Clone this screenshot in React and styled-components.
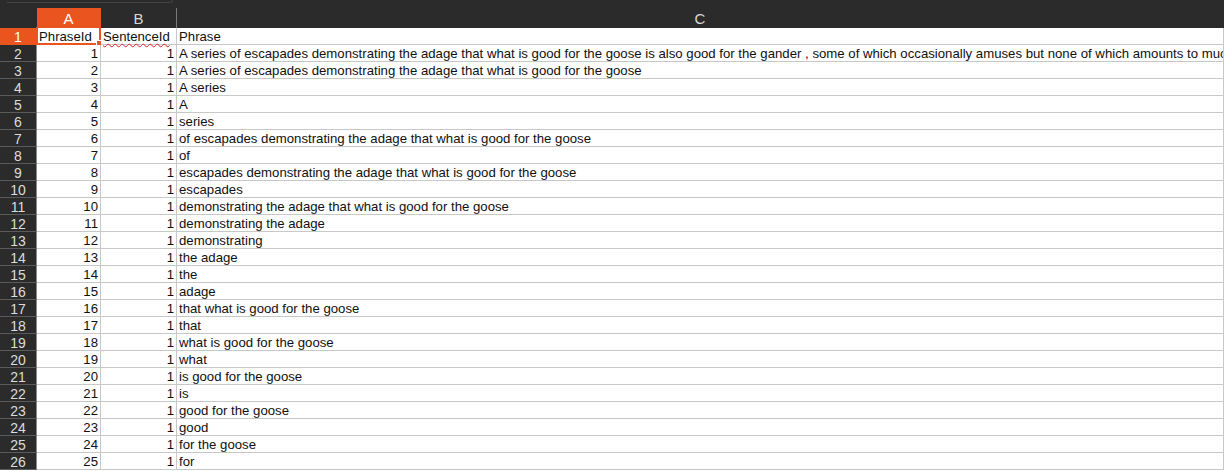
import styled, { createGlobalStyle } from "styled-components";

const GlobalStyle = createGlobalStyle`
  html, body {
    margin: 0;
    padding: 0;
    background: #ffffff;
    overflow: hidden;
  }
  body {
    font-family: "Liberation Sans", Arial, sans-serif;
  }
`;

const ORANGE = "#e9541f";

const Window = styled.div`
  width: 1224px;
  height: 471px;
  display: flex;
  flex-direction: column;
  overflow: hidden;
  background: #ffffff;
`;

const TopStrip = styled.div`
  height: 8px;
  background: #2b2b2b;
  display: flex;
  padding-left: 7px;
`;

const NameBoxEdge = styled.div`
  width: 165px;
  height: 2px;
  border-bottom: 1px solid #444;
  border-right: 1px solid #444;
  border-bottom-right-radius: 3px;
`;

const Sheet = styled.div`
  display: grid;
  grid-template-columns: 37px 64px 76px 1fr;
  grid-auto-rows: 17px;
  grid-template-rows: 20px;
`;

const ColHead = styled.div`
  background: ${(p) => (p.$active ? ORANGE : "#2b2b2b")};
  color: ${(p) => (p.$active ? "#ffffff" : "#d8d8d8")};
  font-size: 15px;
  display: flex;
  align-items: center;
  justify-content: center;
  border-right: 1px solid ${(p) => (p.$active ? ORANGE : p.$last ? "#2b2b2b" : "#7a7a7a")};
  box-sizing: border-box;
`;

const Corner = styled.div`
  background: #2b2b2b;
  border-right: 1px solid #2b2b2b;
`;

const RowHead = styled.div`
  background: ${(p) => (p.$active ? ORANGE : "#2b2b2b")};
  color: ${(p) => (p.$active ? "#ffffff" : "#dcdcdc")};
  font-size: 14px;
  display: flex;
  align-items: center;
  justify-content: center;
  padding-top: 1px;
  border-right: 1px solid #8a8a8a;
  border-bottom: 1px solid ${(p) => (p.$active ? ORANGE : "#5a5a5a")};
  box-sizing: border-box;
`;

const Cell = styled.div`
  position: relative;
  font-size: 13.2px;
  color: #101010;
  white-space: nowrap;
  overflow: ${(p) => (p.$clip ? "hidden" : "visible")};
  display: flex;
  align-items: center;
  justify-content: ${(p) => (p.$num ? "flex-end" : "flex-start")};
  padding: 1px 2px 0;
  border-right: 1px solid #c8c8c8;
  border-bottom: 1px solid #c8c8c8;
  box-sizing: border-box;
  line-height: 15px;
`;

const Squiggle = styled.span`
  text-decoration: underline wavy #e02020;
  text-decoration-thickness: 1px;
  text-underline-offset: 2px;
`;

const CursorBox = styled.div`
  position: absolute;
  inset: -1px -1px -1px -1px;
  border: 2px solid ${ORANGE};
  border-top-width: 1px;
  pointer-events: none;
`;

const Handle = styled.div`
  position: absolute;
  right: -3px;
  bottom: -3px;
  width: 4px;
  height: 4px;
  background: ${ORANGE};
  border: 1px solid #fff;
`;

const phrases = [
  "A series of escapades demonstrating the adage that what is good for the goose is also good for the gander , some of which occasionally amuses but none of which amounts to much of a story .",
  "A series of escapades demonstrating the adage that what is good for the goose",
  "A series",
  "A",
  "series",
  "of escapades demonstrating the adage that what is good for the goose",
  "of",
  "escapades demonstrating the adage that what is good for the goose",
  "escapades",
  "demonstrating the adage that what is good for the goose",
  "demonstrating the adage",
  "demonstrating",
  "the adage",
  "the",
  "adage",
  "that what is good for the goose",
  "that",
  "what is good for the goose",
  "what",
  "is good for the goose",
  "is",
  "good for the goose",
  "good",
  "for the goose",
  "for",
];

function Row({ n, id, text }) {
  return (
    <>
      <RowHead>{n}</RowHead>
      <Cell $num>{id}</Cell>
      <Cell $num>1</Cell>
      <Cell $clip>{text}</Cell>
    </>
  );
}

export default function App() {
  return (
    <>
      <GlobalStyle />
      <Window>
        <TopStrip>
          <NameBoxEdge />
        </TopStrip>
        <Sheet>
          <Corner />
          <ColHead $active>A</ColHead>
          <ColHead>B</ColHead>
          <ColHead $last>C</ColHead>

          <RowHead $active>1</RowHead>
          <Cell>
            PhraseId
            <CursorBox>
              <Handle />
            </CursorBox>
          </Cell>
          <Cell>
            <Squiggle>SentenceId</Squiggle>
          </Cell>
          <Cell $clip>Phrase</Cell>

          {phrases.map((text, i) => (
            <Row key={i} n={i + 2} id={i + 1} text={text} />
          ))}
        </Sheet>
      </Window>
    </>
  );
}
